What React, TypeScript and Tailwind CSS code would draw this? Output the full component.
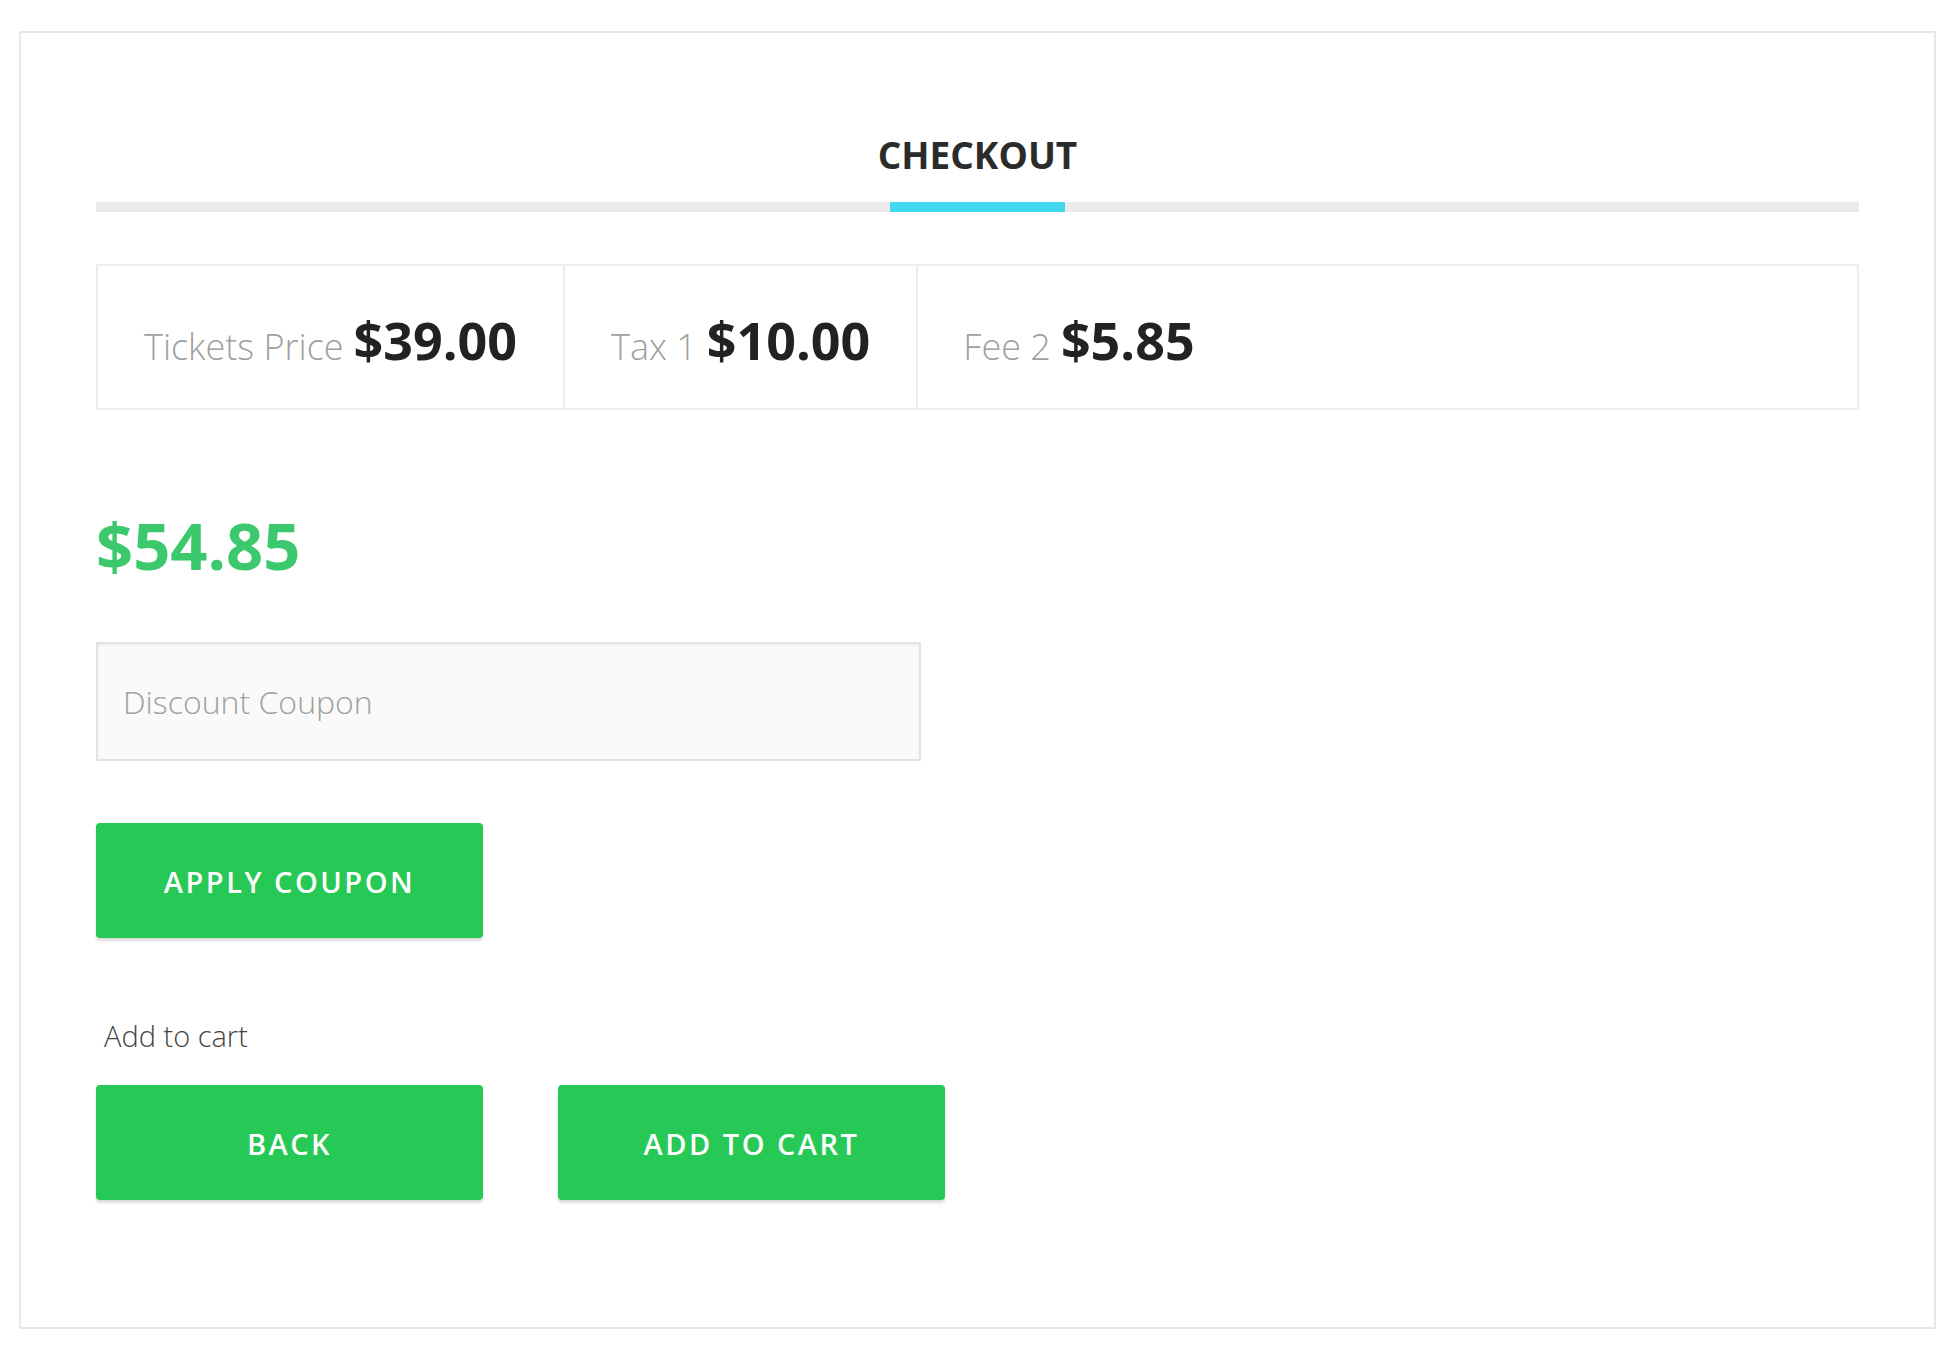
import React from "react";

const fees = [
  { label: "Tickets Price", amount: "$39.00" },
  { label: "Tax 1", amount: "$10.00" },
  { label: "Fee 2", amount: "$5.85" },
];

function GreenButton({ label }: { label: string }) {
  return (
    <button className="w-[387px] h-[115px] pt-[3px] rounded-[4px] bg-[#26c955] text-white text-[29px] font-semibold tracking-[2.5px] shadow-[0_3px_3px_rgba(0,0,0,0.14)]">
      {label}
    </button>
  );
}

export default function App() {
  return (
    <div className="min-h-screen bg-white pt-[31px] px-[19px] font-['Open_Sans',sans-serif]">
      <div className="w-[1917px] h-[1298px] border-2 border-[#e8e8e8] px-[75px] pt-[97px]">
        <h1 className="text-center text-[37px] leading-[50px] font-bold text-[#2b2b2b]">CHECKOUT</h1>

        <div className="mt-[22px] h-[10px] bg-[#ebebeb] flex justify-center">
          <div className="w-[175px] h-full bg-[#42d8ef]" />
        </div>

        <div className="mt-[52px] h-[146px] border-2 border-[#ededed] flex">
          {fees.map((f, i) => (
            <div
              key={f.label}
              className={
                i < fees.length - 1
                  ? "flex items-center px-[46px] border-r-2 border-[#ededed]"
                  : "flex items-center px-[45px] flex-1"
              }
            >
              <div className="flex items-baseline gap-[10px] pt-[6px]">
                <span className="text-[36px] font-light text-[#a0a0a0]">{f.label}</span>
                <span className="text-[52px] font-bold text-[#222]">{f.amount}</span>
              </div>
            </div>
          ))}
        </div>

        <div className="mt-[103px] text-[65px] leading-none font-bold text-[#3cc86c]">$54.85</div>

        <input
          type="text"
          placeholder="Discount Coupon"
          className="mt-[64px] block w-[825px] h-[119px] border-2 border-[#e2e2e2] bg-[#fafafa] px-[25px] text-[32px] font-light text-[#555] placeholder:text-[#a0a0a0] outline-none shadow-[inset_0_1px_3px_rgba(0,0,0,0.06)]"
        />

        <div className="mt-[62px]">
          <GreenButton label="APPLY COUPON" />
        </div>

        <p className="mt-[83px] ml-2 text-[29px] leading-none font-light text-[#444]">Add to cart</p>

        <div className="mt-[35px] flex gap-[75px]">
          <GreenButton label="BACK" />
          <GreenButton label="ADD TO CART" />
        </div>
      </div>
    </div>
  );
}
